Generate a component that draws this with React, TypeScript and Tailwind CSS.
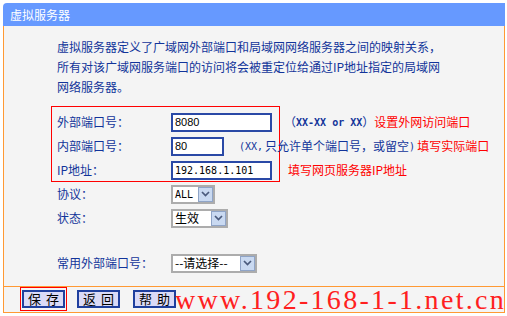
import type { ReactNode } from "react";

const cjk = "font-['SimSun','Noto_Sans_CJK_SC',sans-serif]";

const Chevron = () => (
  <svg width="9" height="6" viewBox="0 0 9 6">
    <path d="M1 1 L4.5 4.5 L8 1" fill="none" stroke="#4a5a7c" strokeWidth="1.7" />
  </svg>
);

function FakeSelect({ width, children }: { width: string; children: ReactNode }) {
  return (
    <div className={`flex h-[19px] ${width} items-stretch border-2 border-[#acacac] bg-white`}>
      <span className="flex flex-1 items-center pl-[2px] text-[12px] text-black whitespace-nowrap">
        {children}
      </span>
      <span className="flex w-[15px] items-center justify-center border border-[#8fa4c7] bg-[#c9d9f1]">
        <Chevron />
      </span>
    </div>
  );
}

function Field({ value, width, ip }: { value: string; width: string; ip?: boolean }) {
  return (
    <div
      className={`flex h-[19px] ${width} shrink-0 items-center border-2 border-[#2a49a6] bg-white pl-[2px] text-black ${
        ip
          ? "font-['DejaVu_Sans_Mono',monospace] text-[10px]"
          : "font-['Liberation_Sans',Arial,sans-serif] text-[11px]"
      }`}
    >
      {value}
    </div>
  );
}

function Btn({ a, b }: { a: string; b: string }) {
  return (
    <div className="flex h-[18px] w-[43px] items-center justify-center gap-[5px] border-2 border-[#1f3f9e] bg-[#dadaf7] text-[13px] text-black">
      <span>{a}</span>
      <span>{b}</span>
    </div>
  );
}

export default function App() {
  return (
    <div className={`relative h-[316px] w-[507px] overflow-hidden bg-white ${cjk}`}>
      <div className="ml-[3px] mt-[3px] w-[502px]">
        {/* 标题栏 */}
        <div className="flex h-[23px] items-center rounded-tl-[4px] bg-[#6699ff] pl-[7px] text-[12px] text-white">
          虚拟服务器
        </div>
        <div className="h-[287px] border-x border-b border-[#ff9933] bg-[#f4f4f4]">
          <div className="h-[260px] text-[12px] text-[#12349a]">
            {/* 说明 */}
            <p className="whitespace-nowrap pl-[53px] pt-[11px] leading-[20px]">
              虚拟服务器定义了广域网外部端口和局域网网络服务器之间的映射关系，
              <br />
              所有对该广域网服务端口的访问将会被重定位给通过IP地址指定的局域网
              <br />
              网络服务器。
            </p>
            {/* 端口设置 */}
            <div className="ml-[47px] mt-[9px] h-[76px] w-[229px] border border-[#ff0000] pl-[5px] pt-[3px]">
              <div className="flex h-[24px] items-center">
                <span className="w-[114px] shrink-0">外部端口号：</span>
                <Field value="8080" width="w-[101px]" />
                <span className="ml-[12px] flex shrink-0 items-center whitespace-nowrap">
                  （
                  <span className="font-['DejaVu_Sans_Mono',monospace] text-[10px] font-bold">
                    XX-XX or XX
                  </span>
                  ）<span className="text-[#ff0000]">设置外网访问端口</span>
                </span>
              </div>
              <div className="flex h-[24px] items-center">
                <span className="w-[114px] shrink-0">内部端口号：</span>
                <Field value="80" width="w-[53px]" />
                <span className="ml-[15px] flex shrink-0 items-center whitespace-nowrap">
                  <span className="mr-[2px] font-['DejaVu_Sans_Mono',monospace] text-[10px]">(XX,</span>
                  只允许单个端口号，或留空
                  <span className="font-['DejaVu_Sans_Mono',monospace] text-[10px]">)</span>
                  <span className="ml-[2px] text-[#ff0000]">填写实际端口</span>
                </span>
              </div>
              <div className="flex h-[24px] items-center">
                <span className="w-[114px] shrink-0">IP地址：</span>
                <Field value="192.168.1.101" width="w-[101px]" ip />
                <span className="ml-[16px] shrink-0 whitespace-nowrap text-[#ff0000]">
                  填写网页服务器IP地址
                </span>
              </div>
            </div>
            {/* 协议 / 状态 */}
            <div className="flex h-[24px] items-center pl-[53px]">
              <span className="w-[114px]">协议：</span>
              <FakeSelect width="w-[44px]">
                <span className="font-['DejaVu_Sans_Mono',monospace] text-[10px]">ALL</span>
              </FakeSelect>
            </div>
            <div className="flex h-[24px] items-center pl-[53px]">
              <span className="w-[114px]">状态：</span>
              <FakeSelect width="w-[57px]">生效</FakeSelect>
            </div>
            <div className="mt-[21px] flex h-[24px] items-center pl-[53px]">
              <span className="w-[114px]">常用外部端口号：</span>
              <FakeSelect width="w-[86px]">--请选择--</FakeSelect>
            </div>
          </div>
          {/* 按钮 */}
          <div className="flex h-[26px] items-start border-t border-[#ff9933] pl-[16px]">
            <div className="flex h-[24px] w-[47px] items-center justify-center border border-[#ff0000]">
              <Btn a="保" b="存" />
            </div>
            <div className="ml-[10px] mt-[3px]">
              <Btn a="返" b="回" />
            </div>
            <div className="ml-[13px] mt-[3px]">
              <Btn a="帮" b="助" />
            </div>
          </div>
        </div>
      </div>
      {/* 水印 */}
      <div className="absolute left-[175px] top-[286px] whitespace-nowrap font-['Liberation_Serif',serif] text-[28px] leading-[28px] tracking-[2.3px] text-[#ff2020]">
        www.192-168-1-1.net.cn
      </div>
    </div>
  );
}
